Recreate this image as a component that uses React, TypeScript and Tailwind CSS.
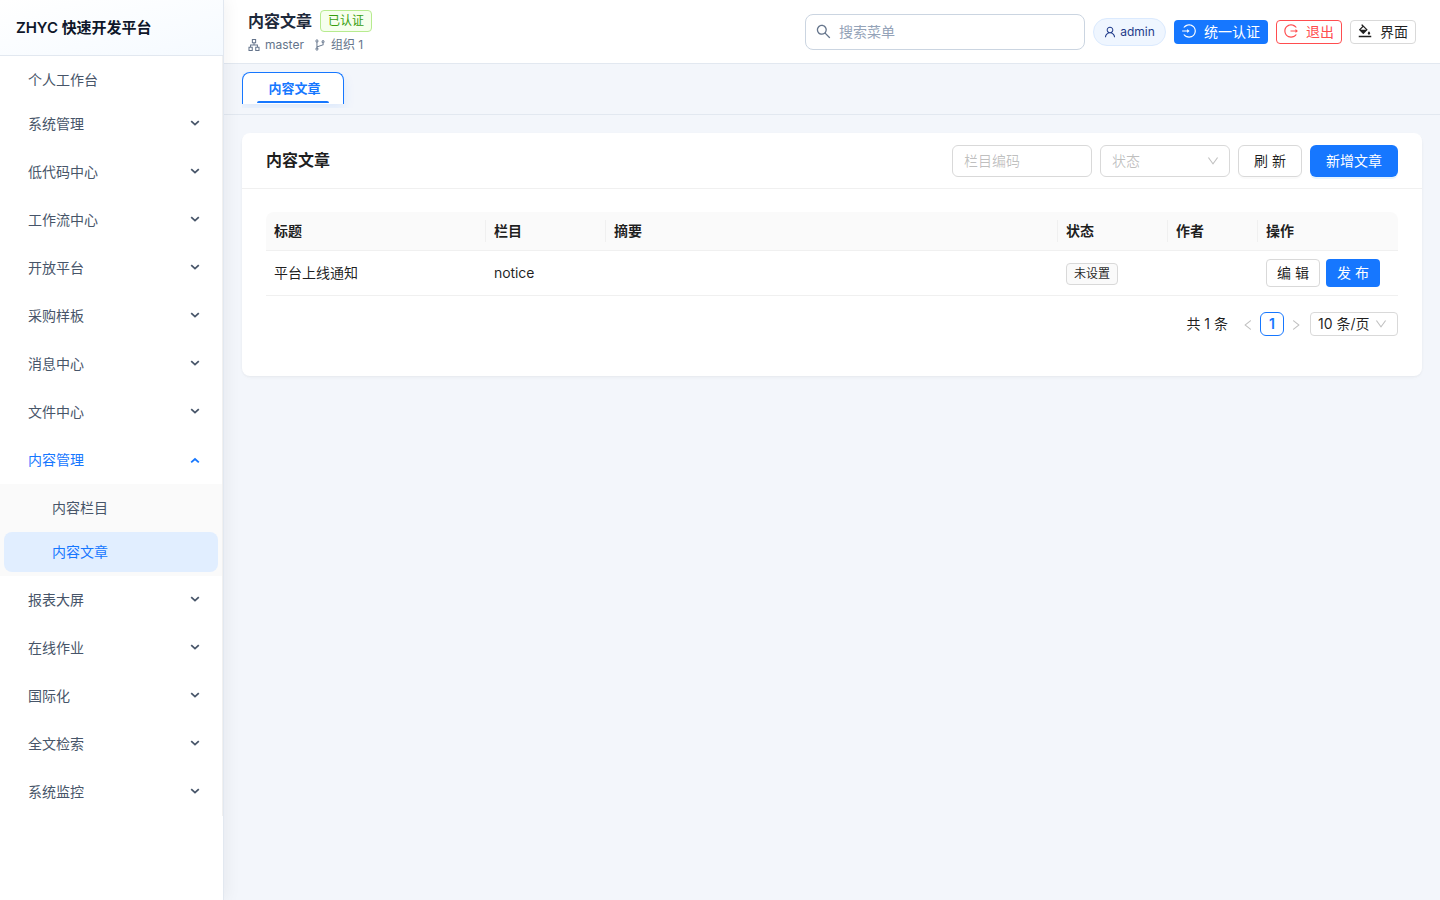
import React from "react";
import {
  AiOutlineApartment,
  AiOutlineBgColors,
  AiOutlineBranches,
  AiOutlineDown,
  AiOutlineLeft,
  AiOutlineLogin,
  AiOutlineLogout,
  AiOutlineRight,
  AiOutlineSearch,
  AiOutlineUser,
} from "react-icons/ai";

type MenuItem = {
  label: string;
  leaf?: boolean;
  children?: string[];
};

const menu: MenuItem[] = [
  { label: "个人工作台", leaf: true },
  { label: "系统管理" },
  { label: "低代码中心" },
  { label: "工作流中心" },
  { label: "开放平台" },
  { label: "采购样板" },
  { label: "消息中心" },
  { label: "文件中心" },
  { label: "内容管理", children: ["内容栏目", "内容文章"] },
  { label: "报表大屏" },
  { label: "在线作业" },
  { label: "国际化" },
  { label: "全文检索" },
  { label: "系统监控" },
];

const columns = ["标题", "栏目", "摘要", "状态", "作者", "操作"];
const tableGrid = "grid grid-cols-[220px_120px_1fr_110px_90px_140px]";

// the icon set leaves a margin of 64 units on every side
const tight = "64 64 896 896";

function Arrow({ open }: { open?: boolean }) {
  return (
    <svg className="h-[10px] w-[10px]" viewBox="0 0 10 10" fill="none" stroke="currentColor" strokeWidth="1.8">
      <path d={open ? "M1.2 7.4L5 4L8.8 7.4" : "M1.2 2.2L5 5.6L8.8 2.2"} />
    </svg>
  );
}

function Sidebar() {
  return (
    <aside className="z-10 w-56 shrink-0 border-r border-[#e2e8f0] bg-white shadow-[2px_0_16px_rgba(15,23,42,0.06)]">
      <div className="flex h-14 items-center border-b border-[#e2e8f0] bg-gradient-to-br from-white to-[#f5faff] px-4 pt-0.5 text-[15px] font-semibold tracking-[-0.05px] text-[#0f172a]">
        ZHYC 快速开发平台
      </div>
      <nav className="border-r border-[#f0f0f0] pt-1 text-sm text-[#475569]">
        {menu.map((item) => (
          <div key={item.label} className={item.leaf ? "pb-1" : "pb-2 last:pb-1"}>
            <div
              className={`flex h-10 items-center justify-between pr-[22px] pl-7 ${item.children ? "text-[#1677ff]" : ""}`}
            >
              <span>{item.label}</span>
              {!item.leaf && <Arrow open={!!item.children} />}
            </div>
            {item.children && (
              <div className="-mb-1 mt-1 flex flex-col gap-1 bg-[#fafafa] px-1 py-1">
                {item.children.map((child) => (
                  <div
                    key={child}
                    className={`flex h-10 items-center rounded-lg pl-12 ${child === "内容文章" ? "bg-[#e1eeff] text-[#1677ff]" : ""}`}
                  >
                    {child}
                  </div>
                ))}
              </div>
            )}
          </div>
        ))}
      </nav>
    </aside>
  );
}

function Header() {
  return (
    <header className="flex h-16 items-center justify-between border-b border-[#e2e8f0] bg-white px-6">
      <div className="pt-0.5">
        <div className="flex h-6 items-center gap-2">
          <span className="text-base font-semibold text-[#1e293b]">内容文章</span>
          <span className="flex h-[22px] items-center rounded border border-[#b7eb8f] bg-[#f6ffed] px-[7px] text-xs text-[#389e0d]">
            已认证
          </span>
        </div>
        <div className="flex h-6 items-center gap-[10px] text-xs text-[#64748b]">
          <span className="flex items-center gap-[5px]">
            <AiOutlineApartment viewBox={tight} />
            master
          </span>
          <span className="flex items-center gap-[5px]">
            <AiOutlineBranches viewBox={tight} />
            组织 1
          </span>
        </div>
      </div>
      <div className="flex items-center gap-2 text-sm">
        <div className="flex h-9 w-[280px] items-center gap-2 rounded-lg border border-[#cbd5e1] px-[10px] text-[#94a3b8]">
          <AiOutlineSearch viewBox={tight} className="-mt-px h-[15px] w-[15px] text-[#64748b]" />
          搜索菜单
        </div>
        <div className="flex h-7 w-[73px] items-center justify-center gap-1 rounded-full border border-[#dbeafe] bg-[#eff6ff] text-xs text-[#1e3a8a]">
          <AiOutlineUser viewBox={tight} />
          admin
        </div>
        <button className="flex h-6 w-[94px] items-center justify-center gap-2 rounded bg-[#1677ff] text-white">
          <AiOutlineLogin viewBox={tight} className="-mt-0.5" />
          统一认证
        </button>
        <button className="flex h-6 w-[66px] items-center justify-center gap-2 rounded border border-[#ff4d4f] text-[#ff4d4f]">
          <AiOutlineLogout viewBox={tight} className="-mt-0.5" />
          退出
        </button>
        <button className="flex h-6 w-[66px] items-center justify-center gap-2 rounded border border-[#d9d9d9] text-black/88">
          <AiOutlineBgColors viewBox={tight} className="-mt-0.5" />
          界面
        </button>
      </div>
    </header>
  );
}

function TabsBar() {
  return (
    <div className="h-[51px] border-b border-[#e2e8f0] px-[18px] pt-2">
      <div className="-mr-4 h-9 overflow-hidden">
        <div className="flex h-8 w-[102px] flex-col items-center rounded-t-lg border border-b-0 border-[#1677ff] bg-white text-[13px] font-bold text-[#1677ff] shadow-[0_4px_12px_rgba(22,119,255,0.1)]">
          <span className="h-7 pl-[3px] leading-[30px]">内容文章</span>
          <span className="h-0.5 w-[72px] rounded-t bg-[#1677ff]" />
        </div>
      </div>
    </div>
  );
}

function ArticleTable() {
  return (
    <div className="text-sm leading-[22px]">
      <div className={`${tableGrid} h-[39px] rounded-t-lg border-b border-[#f0f0f0] bg-[#fafafa] font-semibold`}>
        {columns.map((name, i) => (
          <div key={name} className="flex items-center justify-between pl-2">
            {name}
            {i < columns.length - 1 && <span className="h-[22px] w-px bg-[#f0f0f0]" />}
          </div>
        ))}
      </div>
      <div className={`${tableGrid} h-[45px] items-center border-b border-[#f0f0f0]`}>
        <div className="pl-2">平台上线通知</div>
        <div className="pl-2 tracking-[-0.1px]">notice</div>
        <div />
        <div className="pt-0.5 pl-2">
          <span className="flex h-[22px] w-[52px] items-center justify-center rounded border border-[#d9d9d9] bg-[#fafafa] text-xs">
            未设置
          </span>
        </div>
        <div />
        <div className="flex gap-1.5 pl-2">
          <button className="h-7 w-[54px] rounded border border-[#d9d9d9]">编 辑</button>
          <button className="h-7 w-[54px] rounded bg-[#1677ff] text-white">发 布</button>
        </div>
      </div>
      <div className="mt-4 flex h-6 items-center justify-end">
        <span className="mr-[14px]">共 1 条</span>
        <AiOutlineLeft viewBox={tight} className="mt-px mr-1.5 h-3 w-3 text-black/25" />
        <span className="flex h-6 w-6 items-center justify-center rounded-md border border-[#1677ff] font-semibold text-[#1677ff]">
          1
        </span>
        <AiOutlineRight viewBox={tight} className="mt-px ml-1.5 h-3 w-3 text-black/25" />
        <span className="ml-2 flex h-6 w-[88px] items-center justify-between rounded border border-[#d9d9d9] pr-[10px] pl-[7px]">
          10 条/页
          <AiOutlineDown viewBox={tight} className="h-3 w-3 text-black/25" />
        </span>
      </div>
    </div>
  );
}

function App() {
  return (
    <div className="flex h-screen overflow-hidden bg-[#f3f6fb] font-['Inter','Noto_Sans_CJK_SC',sans-serif] text-black/88">
      <Sidebar />
      <div className="min-w-0 flex-1">
        <Header />
        <TabsBar />
        <main className="p-[18px]">
          <section className="h-[243px] rounded-lg bg-white shadow-[0_1px_2px_rgba(0,0,0,0.03),0_1px_6px_-1px_rgba(0,0,0,0.02),0_2px_4px_rgba(0,0,0,0.02)]">
            <div className="flex h-14 items-center justify-between border-b border-[#f0f0f0] px-6">
              <h2 className="pb-0.5 text-base font-semibold">内容文章</h2>
              <div className="flex gap-2 text-sm">
                <div className="flex h-8 w-[140px] items-center rounded-md border border-[#d9d9d9] px-[11px] text-black/25">
                  栏目编码
                </div>
                <div className="flex h-8 w-[130px] items-center justify-between rounded-md border border-[#d9d9d9] px-[11px] text-black/25">
                  状态
                  <AiOutlineDown viewBox={tight} className="-mr-px h-3 w-3" />
                </div>
                <button className="h-8 w-16 rounded-md border border-[#d9d9d9] shadow-[0_2px_0_rgba(0,0,0,0.02)]">
                  刷 新
                </button>
                <button className="h-8 w-[88px] rounded-md bg-[#1677ff] text-white shadow-[0_2px_0_rgba(5,145,255,0.1)]">
                  新增文章
                </button>
              </div>
            </div>
            <div className="px-6 pt-[23px]">
              <ArticleTable />
            </div>
          </section>
        </main>
      </div>
    </div>
  );
}

export default App;
